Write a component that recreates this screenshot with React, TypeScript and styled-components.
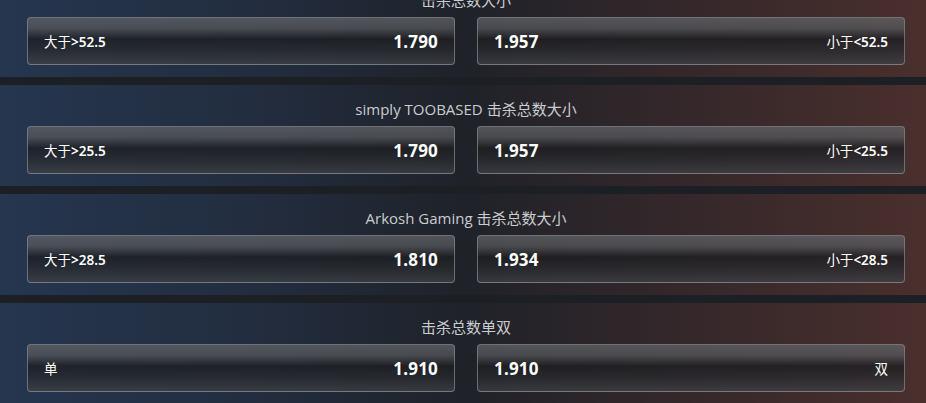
import styled, { createGlobalStyle } from 'styled-components';

const GlobalStyle = createGlobalStyle`
  html, body {
    margin: 0;
    padding: 0;
    overflow: hidden;
    background: #1c1f23;
  }
`;

const Page = styled.div`
  width: 926px;
  height: 403px;
  overflow: hidden;
  background: linear-gradient(90deg, #25364f 0%, #222c3d 30%, #1f2229 50%, #33272a 72%, #4a2f2d 100%);
  font-family: "Noto Sans", "Noto Sans CJK SC", sans-serif;
`;

// list is scrolled a bit, first market title peeks out at the top
const List = styled.div`
  margin-top: -24px;
`;

const Market = styled.section`
  padding: 13px 21px 12px 27px;
  border-bottom: 8px solid #1c1f23;
`;

const Title = styled.div`
  height: 22px;
  margin-bottom: 6px;
  line-height: 22px;
  text-align: center;
  font-family: "Open Sans", "Noto Sans CJK SC", sans-serif;
  font-size: 15px;
  color: #caccd0;
`;

const Row = styled.div`
  display: grid;
  grid-template-columns: 1fr 1fr;
  column-gap: 22px;
`;

const OddsButton = styled.div<{ $reverse?: boolean }>`
  height: 48px;
  box-sizing: border-box;
  padding: 0 16px;
  display: flex;
  flex-direction: ${({ $reverse }) => ($reverse ? 'row-reverse' : 'row')};
  align-items: center;
  justify-content: space-between;
  border: 1px solid rgba(130, 134, 140, 0.75);
  border-radius: 4px;
  background: linear-gradient(
    180deg,
    rgba(96, 98, 102, 0.78) 0%,
    rgba(84, 86, 90, 0.78) 22%,
    rgba(29, 30, 33, 0.8) 46%,
    rgba(40, 42, 46, 0.78) 70%,
    rgba(62, 64, 69, 0.78) 100%
  );
  color: #fff;
  cursor: pointer;
`;

const Label = styled.span`
  font-size: 13.5px;
  font-weight: 600;
`;

const Cjk = styled.span`
  font-weight: 400;
`;

const Odds = styled.span`
  font-size: 17px;
  font-weight: 700;
  letter-spacing: 0.2px;
`;

type Side = { word: string; line: string; odds: string };
type Line = { title: string; over: Side; under: Side };

const markets: Line[] = [
  {
    title: '击杀总数大小',
    over: { word: '大于', line: '>52.5', odds: '1.790' },
    under: { word: '小于', line: '<52.5', odds: '1.957' },
  },
  {
    title: 'simply TOOBASED 击杀总数大小',
    over: { word: '大于', line: '>25.5', odds: '1.790' },
    under: { word: '小于', line: '<25.5', odds: '1.957' },
  },
  {
    title: 'Arkosh Gaming 击杀总数大小',
    over: { word: '大于', line: '>28.5', odds: '1.810' },
    under: { word: '小于', line: '<28.5', odds: '1.934' },
  },
  {
    title: '击杀总数单双',
    over: { word: '单', line: '', odds: '1.910' },
    under: { word: '双', line: '', odds: '1.910' },
  },
];

const App = () => (
  <>
    <GlobalStyle />
    <Page>
      <List>
        {markets.map((m, index) => (
          <Market key={index}>
            <Title>{m.title}</Title>
            <Row>
              <OddsButton>
                <Label><Cjk>{m.over.word}</Cjk>{m.over.line}</Label>
                <Odds>{m.over.odds}</Odds>
              </OddsButton>
              <OddsButton $reverse>
                <Label><Cjk>{m.under.word}</Cjk>{m.under.line}</Label>
                <Odds>{m.under.odds}</Odds>
              </OddsButton>
            </Row>
          </Market>
        ))}
      </List>
    </Page>
  </>
);

export default App;
